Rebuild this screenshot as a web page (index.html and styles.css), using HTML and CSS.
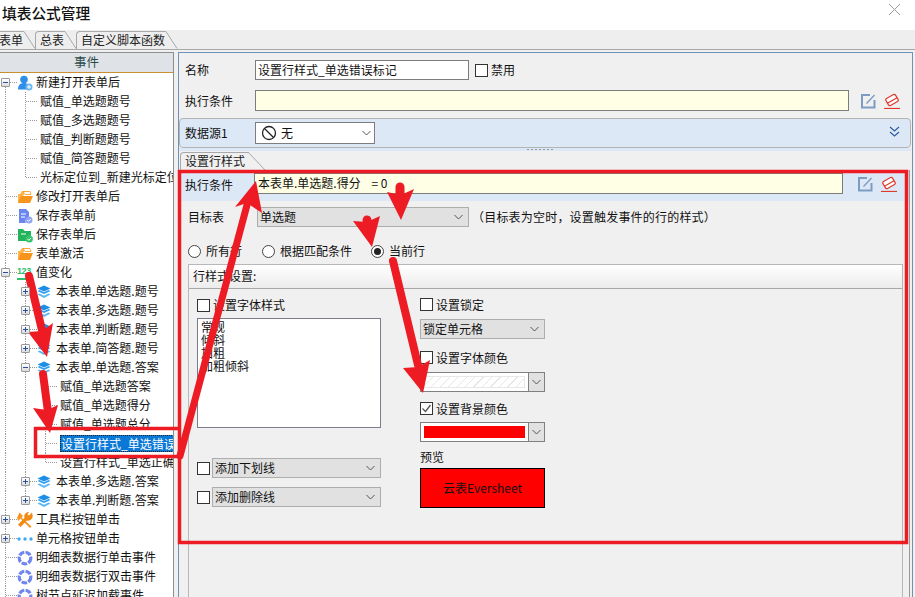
FILE: index.html
```html
<!DOCTYPE html>
<html lang="zh">
<head>
<meta charset="utf-8">
<title>填表公式管理</title>
<link rel="stylesheet" href="styles.css">
</head>
<body>
<svg class="defs" width="0" height="0">
  <symbol id="i-user" viewBox="0 0 16 16"><circle cx="7" cy="4.500" r="3.800" fill="#2f8fe8"/><path d="M1 14.500c0-4.500 2.500-6.500 6-6.500 1.500 0 2.500.3 3.500 1v5.500z" fill="#2f8fe8"/><circle cx="12" cy="12" r="3.500" fill="#6cb6f2"/><path d="M10 12h4M12 10v4" stroke="#fff"/></symbol>
  <symbol id="i-folder" viewBox="0 0 16 16"><path d="M1 14V5h2l2-3h5v3H7L4 14z" fill="#fdb44a"/><path d="M6 2.500h7l1 3H8z" fill="#fff" stroke="#f7941d" stroke-width=".8"/><path d="M1 14l3-7h12l-3 7z" fill="#f7941d"/></symbol>
  <symbol id="i-doc" viewBox="0 0 16 16"><path d="M2 1h7l3 3v5a4 4 0 0 0-3 6H2z" fill="#6c86f0"/><path d="M4 6h5M4 9h4" stroke="#fff"/><circle cx="12" cy="12" r="3.500" fill="#8ea3f5"/><path d="M10.300 12l1.300 1.300 2.200-2.400" stroke="#fff" fill="none"/></symbol>
  <symbol id="i-save" viewBox="0 0 16 16"><path d="M1 2h5l1.500 2H14v5a4 4 0 0 0-5 5H1z" fill="#22b45a"/><path d="M4 7h5" stroke="#fff"/><circle cx="12.300" cy="12" r="3.600" fill="#35c46e"/><path d="M10.500 12l1.300 1.300 2.200-2.400" stroke="#fff" fill="none"/></symbol>
  <symbol id="i-layers" viewBox="0 0 14 14"><path d="M7 .5l6.500 3L7 6.500.5 3.500z" fill="#1d8ee6"/><path d="M.5 6l2-1L7 7.200 11.500 5l2 1L7 9z" fill="#2b9bef"/><path d="M.5 9.500l2-1L7 10.700l4.500-2.200 2 1L7 13z" fill="#5cb8f5"/></symbol>
  <symbol id="i-tools" viewBox="0 0 16 16"><path d="M2.500 .5L6 4 4.500 5.500l10 9-1.500 1.500-9.500-9.500L1.500 9 0 6z" fill="#f7941d"/><path d="M15 .5l-3 3-1.500-1 1.500-2.500A4.500 4.500 0 0 0 7.500 6L1 12.500 3.500 15 10 8.500A4.500 4.500 0 0 0 15.500 3z" fill="#f08a12"/></symbol>
  <symbol id="i-dots" viewBox="0 0 16 16"><circle cx="2" cy="8" r="1.700" fill="#3fa9f5"/><circle cx="8" cy="8" r="1.700" fill="#3fa9f5"/><circle cx="14" cy="8" r="1.700" fill="#3fa9f5"/></symbol>
  <symbol id="i-ring" viewBox="0 0 16 16"><circle cx="8" cy="8" r="5.800" fill="none" stroke="#6f86ee" stroke-width="3.200" stroke-dasharray="5.500 1.300"/></symbol>
  <symbol id="i-edit" viewBox="0 0 16 16"><path d="M10 2H2v12.500h12.500V7" fill="none" stroke="#7c9cc4" stroke-width="2"/><path d="M6.500 9.500L14 1.500l1 1-7.500 8-1.500.5z" fill="#7c9cc4"/></symbol>
  <symbol id="i-erase" viewBox="0 0 16 16"><path d="M0 15.500h16" stroke="#e0382a" stroke-width="1.200"/><g transform="rotate(-30 8 7)"><rect x="2.500" y="3" width="11" height="8" rx="1.500" fill="#fff" stroke="#e0382a" stroke-width="1.200"/><path d="M2.500 7.500h11" stroke="#e0382a" stroke-width="1.200"/></g></symbol>
  <symbol id="i-chev" viewBox="0 0 9 6"><path d="M.5 1l4 4 4-4" fill="none" stroke="#555"/></symbol>
</svg>

<div class="app">
  <header class="titlebar">
    <span class="title">填表公式管理</span>
    <svg class="close" viewBox="0 0 11 11"><path d="M0 0l11 11M11 0L0 11" stroke="#9a9a9a"/></svg>
  </header>

  <nav class="tabs">
    <div class="tab first"><span>表单</span><svg class="slant" viewBox="0 0 12 19"><path d="M0 .5l11 17" stroke="#a8a8a8" fill="none"/></svg></div>
    <div class="tab"><span>总表</span><svg class="slant" viewBox="0 0 12 19"><path d="M0 .5l11 17" stroke="#a8a8a8" fill="none"/></svg></div>
    <div class="tab"><span>自定义脚本函数</span><svg class="slant" viewBox="0 0 12 19"><path d="M0 .5l11 17" stroke="#a8a8a8" fill="none"/></svg></div>
  </nav>

  <main class="main">
    <aside class="left">
      <div class="lefthead">事件</div>
      <div class="tree">
        <div class="row"><i class="c h top"><b class="exp minus"></b></i><svg class="ico"><use href="#i-user"/></svg><span>新建打开表单后</span></div>
        <div class="row"><i class="c v"></i><i class="c t"></i><span class="leaf">赋值_单选题题号</span></div>
        <div class="row"><i class="c v"></i><i class="c t"></i><span class="leaf">赋值_多选题题号</span></div>
        <div class="row"><i class="c v"></i><i class="c t"></i><span class="leaf">赋值_判断题题号</span></div>
        <div class="row"><i class="c v"></i><i class="c t"></i><span class="leaf">赋值_简答题题号</span></div>
        <div class="row"><i class="c v"></i><i class="c l"></i><span class="leaf">光标定位到_新建光标定位</span></div>
        <div class="row"><i class="c t"></i><svg class="ico"><use href="#i-folder"/></svg><span>修改打开表单后</span></div>
        <div class="row"><i class="c t"></i><svg class="ico"><use href="#i-doc"/></svg><span>保存表单前</span></div>
        <div class="row"><i class="c t"></i><svg class="ico"><use href="#i-save"/></svg><span>保存表单后</span></div>
        <div class="row"><i class="c t"></i><svg class="ico"><use href="#i-folder"/></svg><span>表单激活</span></div>
        <div class="row"><i class="c t"><b class="exp minus"></b></i><em class="num">123</em><span>值变化</span></div>
        <div class="row"><i class="c v"></i><i class="c t"><b class="exp plus"></b></i><svg class="ico sm"><use href="#i-layers"/></svg><span>本表单.单选题.题号</span></div>
        <div class="row"><i class="c v"></i><i class="c t"><b class="exp plus"></b></i><svg class="ico sm"><use href="#i-layers"/></svg><span>本表单.多选题.题号</span></div>
        <div class="row"><i class="c v"></i><i class="c t"><b class="exp plus"></b></i><svg class="ico sm"><use href="#i-layers"/></svg><span>本表单.判断题.题号</span></div>
        <div class="row"><i class="c v"></i><i class="c t"><b class="exp plus"></b></i><svg class="ico sm"><use href="#i-layers"/></svg><span>本表单.简答题.题号</span></div>
        <div class="row"><i class="c v"></i><i class="c t"><b class="exp minus"></b></i><svg class="ico sm"><use href="#i-layers"/></svg><span>本表单.单选题.答案</span></div>
        <div class="row"><i class="c v"></i><i class="c v"></i><i class="c t"></i><span class="leaf">赋值_单选题答案</span></div>
        <div class="row"><i class="c v"></i><i class="c v"></i><i class="c t"></i><span class="leaf">赋值_单选题得分</span></div>
        <div class="row"><i class="c v"></i><i class="c v"></i><i class="c t"></i><span class="leaf">赋值_单选题总分</span></div>
        <div class="row"><i class="c v"></i><i class="c v"></i><i class="c t"></i><span class="leaf selected">设置行样式_单选错误标记</span></div>
        <div class="row"><i class="c v"></i><i class="c v"></i><i class="c l"></i><span class="leaf">设置行样式_单选正确标记</span></div>
        <div class="row"><i class="c v"></i><i class="c t"><b class="exp plus"></b></i><svg class="ico sm"><use href="#i-layers"/></svg><span>本表单.多选题.答案</span></div>
        <div class="row"><i class="c v"></i><i class="c l"><b class="exp plus"></b></i><svg class="ico sm"><use href="#i-layers"/></svg><span>本表单.判断题.答案</span></div>
        <div class="row"><i class="c t"><b class="exp plus"></b></i><svg class="ico"><use href="#i-tools"/></svg><span>工具栏按钮单击</span></div>
        <div class="row"><i class="c t"><b class="exp plus"></b></i><svg class="ico"><use href="#i-dots"/></svg><span>单元格按钮单击</span></div>
        <div class="row"><i class="c t"></i><svg class="ico"><use href="#i-ring"/></svg><span>明细表数据行单击事件</span></div>
        <div class="row"><i class="c t"></i><svg class="ico"><use href="#i-ring"/></svg><span>明细表数据行双击事件</span></div>
        <div class="row"><i class="c t"></i><svg class="ico"><use href="#i-ring"/></svg><span>树节点延迟加载事件</span></div>
      </div>
    </aside>

    <section class="right">
      <div class="frow name-row">
        <label class="lbl">名称</label>
        <div class="input name-input">设置行样式_单选错误标记</div>
        <span class="cb disable-cb"></span><span class="cbtext">禁用</span>
      </div>
      <div class="frow cond-row">
        <label class="lbl">执行条件</label>
        <div class="input yellow cond-input"></div>
        <svg class="act first-act"><use href="#i-edit"/></svg>
        <svg class="act"><use href="#i-erase"/></svg>
      </div>
      <div class="source">
        <label class="lbl src-lbl">数据源1</label>
        <div class="input src-select">
          <svg class="ban" viewBox="0 0 16 16"><circle cx="8" cy="8" r="6.500" fill="none" stroke="#222" stroke-width="1.300"/><path d="M3.500 3.500l9 9" stroke="#222" stroke-width="1.300"/></svg>
          <span>无</span>
          <svg class="chev"><use href="#i-chev"/></svg>
        </div>
        <svg class="dchev" viewBox="0 0 11 11"><path d="M1 1l4.500 4L10 1M1 6l4.500 4L10 6" fill="none" stroke="#2b5a9c" stroke-width="1.100"/></svg>
      </div>
      <div class="grip"><span></span></div>
      <div class="subtabs">
        <div class="subtab">设置行样式<svg class="subslant" viewBox="0 0 18 19"><path d="M0 0l17 18" stroke="#a8a8a8" fill="none"/></svg></div>
      </div>
      <div class="tabbody">
        <div class="band">
          <label class="lbl band-lbl">执行条件</label>
          <div class="input yellow band-input">本表单.单选题.得分&nbsp;&nbsp;&nbsp;&nbsp;= 0</div>
          <svg class="act first-act"><use href="#i-edit"/></svg>
          <svg class="act"><use href="#i-erase"/></svg>
        </div>
        <div class="target-row">
          <label class="lbl target-lbl">目标表</label>
          <div class="sel target-sel"><span>单选题</span><svg class="chev"><use href="#i-chev"/></svg></div>
          <span class="note">（目标表为空时，设置触发事件的行的样式）</span>
        </div>
        <div class="radios">
          <span class="radio"></span><span class="rtext r1">所有行</span>
          <span class="radio"></span><span class="rtext r2">根据匹配条件</span>
          <span class="radio on"></span><span class="rtext">当前行</span>
        </div>
        <div class="group">
          <div class="grouphead">行样式设置:</div>
          <div class="groupbody">
            <div class="col-a">
              <div class="check ck-first"><span class="cb"></span><span class="cbtext">设置字体样式</span></div>
              <div class="listbox"><div>常规</div><div>倾斜</div><div>加粗</div><div>加粗倾斜</div></div>
              <div class="check-sel under"><span class="cb"></span><div class="sel"><span>添加下划线</span><svg class="chev"><use href="#i-chev"/></svg></div></div>
              <div class="check-sel strike"><span class="cb"></span><div class="sel"><span>添加删除线</span><svg class="chev"><use href="#i-chev"/></svg></div></div>
            </div>
            <div class="col-b">
              <div class="check ck-lock"><span class="cb"></span><span class="cbtext">设置锁定</span></div>
              <div class="sel lock-sel"><span>锁定单元格</span><svg class="chev"><use href="#i-chev"/></svg></div>
              <div class="check ck-next"><span class="cb"></span><span class="cbtext">设置字体颜色</span></div>
              <div class="combo"><div class="swatch hatch"></div><div class="combobtn"><svg class="chev"><use href="#i-chev"/></svg></div></div>
              <div class="check ck-bg"><span class="cb checked"><svg viewBox="0 0 11 11"><path d="M1.500 5.500l3 3 5-6.500" fill="none" stroke="#555" stroke-width="1.300"/></svg></span><span class="cbtext">设置背景颜色</span></div>
              <div class="combo combo-tight"><div class="swatch red"></div><div class="combobtn"><svg class="chev"><use href="#i-chev"/></svg></div></div>
              <div class="preview-lbl">预览</div>
              <div class="preview">云表Eversheet</div>
            </div>
          </div>
        </div>
      </div>
    </section>
  </main>

  <svg class="annot" viewBox="0 0 915 597">
    <g class="frames">
      <rect x="179.500" y="171.500" width="727" height="371"/>
      <path d="M181 428.500H35.500v28H181"/>
    </g>
    <g class="shafts">
      <path class="w8" d="M29 276L42 330"/>
      <path class="w8" d="M43 374L48 412"/>
      <path class="w7" d="M180 456L247 205"/>
      <path class="w9" d="M400 187V196"/>
      <path class="w9" d="M367 220L368 226"/>
      <path class="w8" d="M393 261L418 365"/>
    </g>
    <g class="heads">
      <polygon points="47,357 53,323 42,331 28,332"/>
      <polygon points="50,433 58,405 47,410 33,408"/>
      <polygon points="256,181 262,213 247,203 235,207"/>
      <polygon points="401,220 414,189 401,195 387,192"/>
      <polygon points="372,247 380,216 367,222 353,221"/>
      <polygon points="423,393 430,360 418,367 403,368"/>
    </g>
  </svg>
</div>
</body>
</html>
```

FILE: styles.css
```css
* { box-sizing: border-box; }
html, body { margin: 0; padding: 0; }
body {
  width: 915px;
  height: 597px;
  overflow: hidden;
  font: 12px/16px "Noto Sans CJK SC", "Liberation Sans", sans-serif;
  color: #111;
  background: #f0f0f0;
}
.defs { display: block; height: 0; }
.app { position: relative; width: 915px; height: 597px; display: flex; flex-direction: column; overflow: hidden; }

/* title */
.titlebar { height: 30px; background: #fff; display: flex; justify-content: space-between; align-items: flex-start; flex: none; }
.title { font-size: 14.700px; line-height: 20px; margin: 3px 0 0 2px; color: #111; font-weight: 500; }
.close { width: 11px; height: 11px; margin: 4px 15px 0 0; }

/* top tabs */
.tabs { height: 20px; flex: none; display: flex; border-bottom: 1px solid #a8a8a8; background: #eee; padding-top: 1px; margin-left: -12px; }
.tab { position: relative; height: 18px; border-left: 1px solid #a8a8a8; border-top: 1px solid #a8a8a8; border-top-left-radius: 4px; padding: 0 1px 0 4px; margin-right: 11px; line-height: 16px; color: #222; }
.tab.first { padding-left: 10px; }
.slant { position: absolute; left: 100%; top: -1px; width: 12px; height: 19px; }

/* main */
.main { flex: 1; min-height: 0; display: flex; padding-top: 2px; }
.left { width: 174px; flex: none; border-top: 1px solid #8e8e8e; border-right: 1px solid #8e8e8e; background: #fff; overflow: hidden; display: flex; flex-direction: column; }
.lefthead { height: 20px; flex: none; background: #dfe3e8; border-bottom: 1px solid #c8902e; text-align: center; line-height: 18px; color: #2c4a4a; font-size: 12.500px; }
.tree { flex: 1; overflow: hidden; margin-left: -5px; }
.row { display: flex; height: 19px; align-items: center; white-space: nowrap; color: #111; }
.row > span { margin-bottom: 2px; }
.c { display: block; position: relative; flex: none; width: 20px; height: 19px; font-style: normal; }
.c.v, .c.t { background: repeating-linear-gradient(to bottom, #999 0 1px, transparent 1px 2px) 10px 0 / 1px 100% no-repeat; }
.c.l { background: repeating-linear-gradient(to bottom, #999 0 1px, transparent 1px 2px) 10px 0 / 1px 10px no-repeat; }
.c.top { background: repeating-linear-gradient(to bottom, #999 0 1px, transparent 1px 2px) 10px 10px / 1px 9px no-repeat; }
.c.t::after, .c.l::after, .c.h::after { content: ""; position: absolute; left: 11px; top: 9px; width: 11px; height: 1px; background: repeating-linear-gradient(to right, #999 0 1px, transparent 1px 2px); }
.exp { position: absolute; z-index: 1; left: 6px; top: 5px; width: 9px; height: 9px; border: 1px solid #999; background: linear-gradient(#fff, #dcdcdc); border-radius: 1px; }
.exp::before { content: ""; position: absolute; left: 1px; top: 3px; width: 5px; height: 1px; background: #2a4fa0; }
.exp.plus::after { content: ""; position: absolute; left: 3px; top: 1px; width: 1px; height: 5px; background: #2a4fa0; }
.ico { width: 16px; height: 16px; flex: none; margin: 0 3px 0 2px; position: relative; }
.ico.sm { width: 14px; height: 14px; margin: 0 5px 0 2px; }
.num { flex: none; position: relative; width: 16px; height: 14px; margin: 0 3px 0 2px; border-bottom: 2px solid #2dbf6d; color: #2dbf6d; font: bold 9px/11px "Liberation Sans", sans-serif; letter-spacing: -.4px; }
.leaf { margin-left: 5px; }
.leaf.selected { background: #0a78d7; color: #fff; outline: 1px dotted #222; outline-offset: -1px; display: block; width: 200px; height: 17px; line-height: 17px; padding-left: 1px; margin-bottom: 0; }

/* right panel */
.right { flex: 1; min-width: 0; margin: 0 2px 0 4px; border: 1px solid #6f93b8; border-bottom: 0; display: flex; flex-direction: column; }
.lbl { color: #111; flex: none; }
.frow { display: flex; align-items: center; padding-left: 6px; flex: none; }
.frow .lbl { width: 70px; }
.name-row { height: 20px; margin-top: 7px; }
.input { border: 1px solid #7d7d7d; background: #fff; padding-left: 2px; line-height: 18px; }
.name-input { width: 214px; height: 20px; }
.cb { display: inline-block; flex: none; width: 13px; height: 13px; border: 1px solid #333; background: #fff; position: relative; }
.cb svg { display: block; width: 11px; height: 11px; }
.cbtext { margin-left: 3px; }
.disable-cb { margin-left: 6px; }
.cond-row { height: 21px; margin-top: 10px; }
.yellow { background: #ffffe6; }
.cond-input { width: 594px; height: 21px; }
.act { width: 16px; height: 16px; flex: none; margin-left: 8px; }
.first-act { margin-left: 11px; }
.source { flex: none; height: 30px; margin: 7px 1px 0 0; border: 1px solid #b4b4b4; border-radius: 4px; background: #dce8f6; display: flex; align-items: center; padding-left: 5px; }
.src-lbl { width: 70px; }
.src-select { width: 120px; height: 22px; display: flex; align-items: center; position: relative; padding-left: 5px; }
.ban { width: 16px; height: 16px; margin-right: 4px; }
.chev { width: 9px; height: 6px; flex: none; margin-left: auto; }
.src-select .chev { margin-right: 3px; }
.dchev { width: 11px; height: 11px; margin: 0 10px 4px auto; }
.grip { height: 3px; flex: none; background: #dce8f6; display: flex; justify-content: center; margin-right: 1px; }
.grip span { width: 26px; height: 1px; margin: 1px 0 0 -10px; background: repeating-linear-gradient(to right, #999 0 2px, transparent 2px 4px); }
.subtabs { height: 19px; flex: none; padding: 1px 0 0 1px; }
.subtab { position: relative; width: 68px; height: 18px; border-left: 1px solid #a8a8a8; border-top: 1px solid #a8a8a8; border-top-left-radius: 4px; padding-left: 4px; line-height: 16px; color: #222; }
.subslant { position: absolute; left: 100%; top: -1px; width: 18px; height: 19px; }
.tabbody { flex: 1; min-height: 0; display: flex; flex-direction: column; margin-right: 2px; border-right: 1px solid #999; }
.band { height: 31px; flex: none; background: #dce8f6; display: flex; align-items: flex-start; padding-left: 6px; }
.band-lbl { width: 69px; margin-top: 7px; }
.band-input { width: 589px; height: 21px; margin-top: 3px; padding-left: 3px; }
.band .act { margin-top: 6px; }
.band .first-act { margin-left: 14px; }
.target-row { display: flex; align-items: center; flex: none; height: 20px; margin-top: 6px; padding-left: 9px; }
.target-lbl { width: 69px; }
.sel { display: flex; align-items: center; height: 20px; background: #e1e1e1; border: 1px solid #adadad; padding: 0 5px 0 2px; flex: none; }
.target-sel { width: 212px; }
.note { margin-left: 3px; font-size: 12px; letter-spacing: .2px; }
.radios { display: flex; align-items: center; height: 20px; flex: none; margin-top: 14px; padding-left: 9px; }
.radio { width: 13px; height: 13px; flex: none; border: 1px solid #444; border-radius: 50%; background: #fff; position: relative; }
.radio.on::after { content: ""; position: absolute; left: 2px; top: 2px; width: 7px; height: 7px; border-radius: 50%; background: #222; }
.rtext { margin-left: 5px; }
.r1 { width: 56px; }
.r2 { width: 91px; }
.group { flex: 1; min-height: 0; margin: 3px 6px 0 9px; border: 1px solid #b8b8b8; border-bottom: 0; display: flex; flex-direction: column; }
.grouphead { height: 24px; flex: none; border-bottom: 1px solid #a8a8a8; background: linear-gradient(#fff, #ececec); line-height: 22px; padding-left: 4px; }
.groupbody { display: flex; flex: 1; padding-left: 8px; }
.col-a { width: 184px; flex: none; }
.col-b { width: 125px; flex: none; margin-left: 39px; }
.check { display: flex; align-items: center; height: 13px; }
.ck-first { margin-top: 10px; }
.ck-first .cbtext { margin-bottom: 2px; }
.ck-lock { margin-top: 9px; }
.ck-next { margin-top: 12px; }
.ck-bg { margin-top: 10px; }
.listbox { height: 110px; margin-top: 6px; border: 1px solid #7d7d8a; background: #fff; padding: 1px 0 0 3px; line-height: 13px; }
.check-sel { display: flex; align-items: center; height: 20px; }
.check-sel .sel { margin-left: 2px; width: 169px; }
.under { margin-top: 30px; }
.strike { margin-top: 9px; }
.lock-sel { margin-top: 8px; }
.combo { height: 20px; margin-top: 8px; border: 1px solid #808080; background: #fff; display: flex; }
.combo-tight { margin-top: 7px; }
.swatch { width: 101px; height: 12px; margin: 3px 0 0 3px; flex: none; }
.hatch { border: 1px solid #e8e8e8; background: repeating-linear-gradient(135deg, #fff 0 5px, #e6e6e6 5px 6px); }
.red { background: #f00; }
.combobtn { flex: 1; margin-left: 3px; border-left: 1px solid #808080; background: #e1e1e1; display: flex; align-items: center; justify-content: center; }
.combobtn .chev { margin: 0; }
.preview-lbl { margin-top: 7px; height: 16px; }
.preview { height: 40px; margin-top: 3px; background: #f00; border: 1px solid #000; display: flex; align-items: center; justify-content: center; color: #111; }

/* annotations drawn over the screenshot */
.annot { position: absolute; left: 0; top: 0; width: 915px; height: 597px; pointer-events: none; }
.frames rect, .frames path { fill: none; stroke: #ed1c24; stroke-width: 3.500px; }
.shafts path { fill: none; stroke: #ed1c24; stroke-linecap: round; }
.w7 { stroke-width: 7px; }
.w8 { stroke-width: 8px; }
.w9 { stroke-width: 9px; }
.heads polygon { fill: #ed1c24; }
```
